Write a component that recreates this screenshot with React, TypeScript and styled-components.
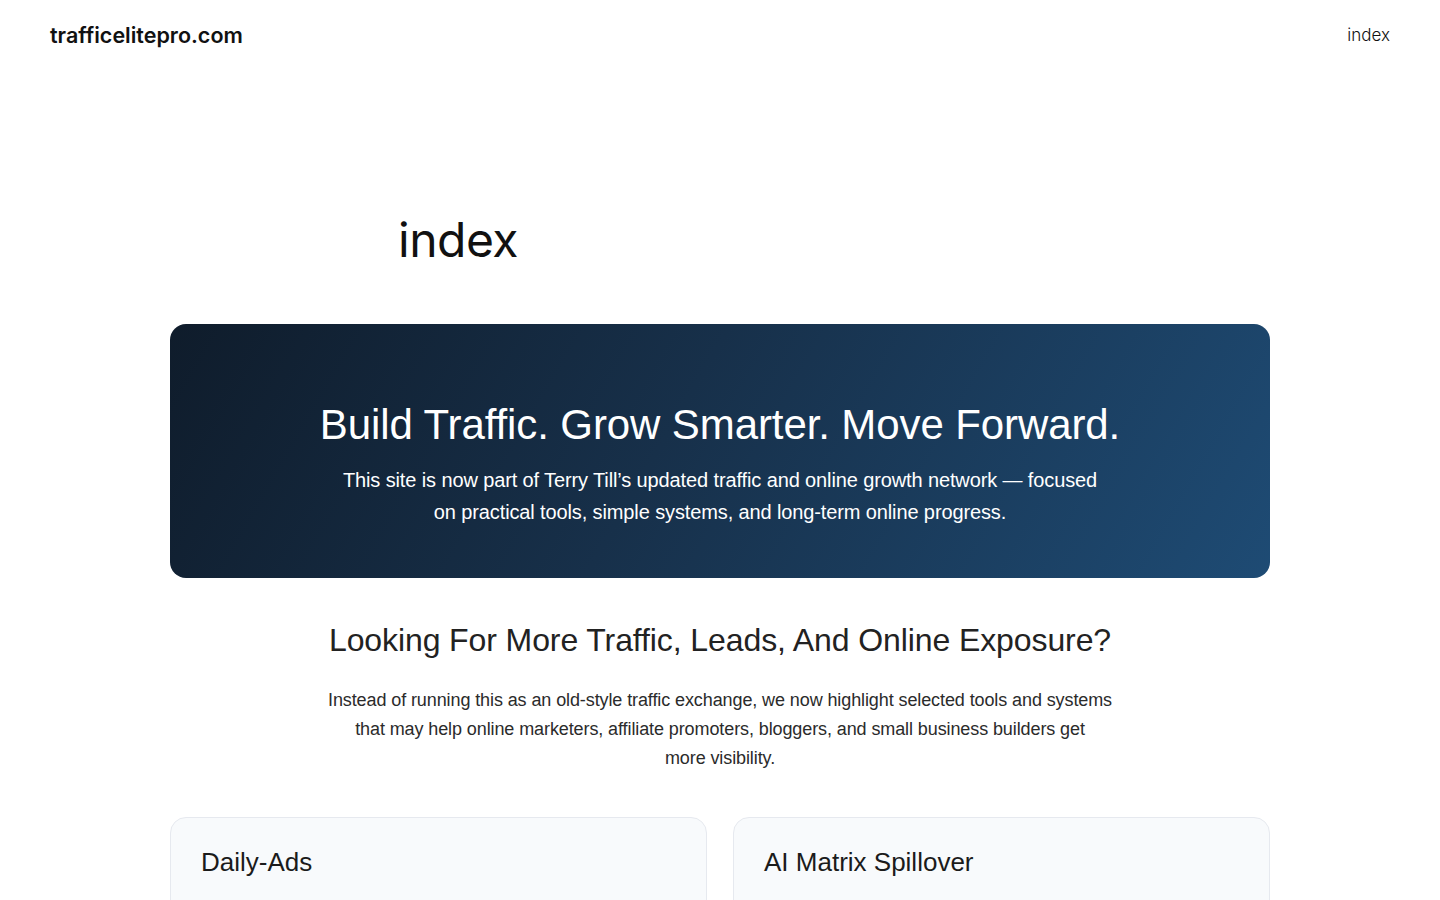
import styled, { createGlobalStyle } from "styled-components"

const GlobalStyle = createGlobalStyle`
	html, body {
		margin: 0;
		padding: 0;
		background: #ffffff;
	}
	* {
		box-sizing: border-box;
	}
`

const Header = styled.header`
	display: flex;
	align-items: center;
	justify-content: space-between;
	height: 70px;
	padding: 0 50px;
	font-family: Inter, "Noto Sans", sans-serif;
`

const Logo = styled.a`
	font-size: 21.5px;
	font-weight: 600;
	color: #111;
	text-decoration: none;
	letter-spacing: 0;
`

const NavLink = styled.a`
	font-size: 17px;
	font-weight: 300;
	color: #111;
	text-decoration: none;
`

const Main = styled.main`
	display: flex;
	flex-direction: column;
	align-items: center;
	padding-top: 141px;
`

const PageTitle = styled.h1`
	width: 644px;
	margin: 0 0 55px;
	font-family: Inter, "Noto Sans", sans-serif;
	font-size: 48px;
	font-weight: 400;
	line-height: 58px;
	letter-spacing: -0.5px;
	color: #111;
`

const Content = styled.div`
	width: 1100px;
	font-family: "Liberation Sans", Arial, sans-serif;
`

const Hero = styled.section`
	display: flex;
	flex-direction: column;
	align-items: center;
	height: 254px;
	padding-top: 76px;
	border-radius: 16px;
	background: linear-gradient(120deg, #0f1c2b 0%, #17304a 45%, #1e4b74 100%);
	color: #fff;
	text-align: center;
`

const HeroTitle = styled.h2`
	margin: 0 0 14px;
	font-size: 42px;
	font-weight: 400;
	line-height: 50px;
	letter-spacing: -0.1px;
`

const HeroText = styled.p`
	margin: 0;
	max-width: 780px;
	font-size: 20px;
	line-height: 32px;
	letter-spacing: -0.12px;
`

const Intro = styled.section`
	display: flex;
	flex-direction: column;
	align-items: center;
	padding-top: 42px;
	text-align: center;
`

const IntroTitle = styled.h2`
	margin: 0 0 26px;
	font-size: 32px;
	font-weight: 400;
	line-height: 40px;
	letter-spacing: -0.1px;
	color: #222;
`

const IntroText = styled.p`
	margin: 0;
	max-width: 800px;
	font-size: 18px;
	line-height: 29px;
	letter-spacing: -0.1px;
	color: #2b2b2b;
	text-wrap: pretty;
`

const CardGrid = styled.div`
	display: grid;
	grid-template-columns: 1fr 1fr;
	gap: 26px;
	margin-top: 44px;
`

const Card = styled.article`
	min-height: 200px;
	padding: 26px 30px;
	border: 1px solid #e6e9ef;
	border-radius: 16px;
	background: #f8fafc;
`

const CardTitle = styled.h3`
	margin: 0;
	font-size: 26px;
	font-weight: 400;
	line-height: 36px;
	color: #1b1b1b;
`

export default function App() {
	return (
		<>
			<GlobalStyle />
			<Header>
				<Logo href="#">trafficelitepro.com</Logo>
				<NavLink href="#">index</NavLink>
			</Header>
			<Main>
				<PageTitle>index</PageTitle>
				<Content>
					<Hero>
						<HeroTitle>Build Traffic. Grow Smarter. Move Forward.</HeroTitle>
						<HeroText>
							This site is now part of Terry Till’s updated traffic and online
							growth network — focused on practical tools, simple systems, and
							long-term online progress.
						</HeroText>
					</Hero>
					<Intro>
						<IntroTitle>
							Looking For More Traffic, Leads, And Online Exposure?
						</IntroTitle>
						<IntroText>
							Instead of running this as an old-style traffic exchange, we now
							highlight selected tools and systems that may help online
							marketers, affiliate promoters, bloggers, and small business
							builders get more visibility.
						</IntroText>
					</Intro>
					<CardGrid>
						<Card>
							<CardTitle>Daily-Ads</CardTitle>
						</Card>
						<Card>
							<CardTitle>AI Matrix Spillover</CardTitle>
						</Card>
					</CardGrid>
				</Content>
			</Main>
		</>
	)
}
